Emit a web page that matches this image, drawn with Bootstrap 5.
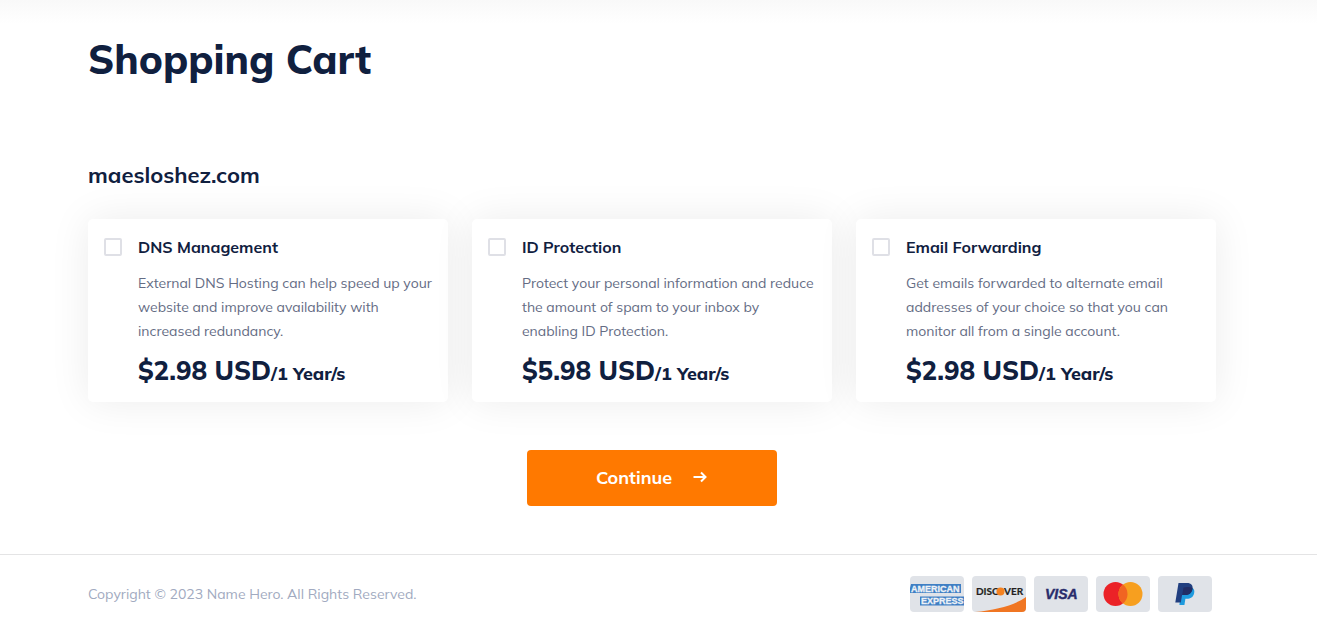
<!DOCTYPE html>
<html lang="en">
<head>
<meta charset="utf-8">
<meta name="viewport" content="width=device-width, initial-scale=1">
<title>Shopping Cart</title>
<link href="https://cdn.jsdelivr.net/npm/bootstrap@5.3.0/dist/css/bootstrap.min.css" rel="stylesheet">
<style>
  :root { --ink: #10203f; --body-ink: #646c84; --muted-ink: #a1aac0; --brand: #ff7900; }
  body { font-family: Mulish, Muli, "Open Sans", sans-serif; color: var(--ink); background: #fff; }
  .top-shade { height: 24px; background: linear-gradient(#f9f9f9, #fff); }
  .page-shell { padding-right: 13px; }
  .cart-container { max-width: 1152px; }
  .cart-title { font-size: 40px; line-height: 48px; font-weight: 800; padding-top: 11px; margin-bottom: 76px; }
  .domain-name { font-size: 22px; line-height: 32px; font-weight: 700; margin-bottom: 28px; }
  .addon-card { border: 0; border-radius: 5px; padding: 16px; box-shadow: 0 0 40px rgba(0, 0, 0, .08); }
  .addon-card .form-check-input { width: 18px; height: 18px; margin: 3px 0 0; border: 2px solid #dfe0e6; border-radius: 2px; }
  .addon-name { font-size: 16px; line-height: 24px; font-weight: 700; }
  .addon-text { font-size: 14px; line-height: 24px; color: var(--body-ink); margin: 12px 0; }
  .addon-price { font-size: 26px; line-height: 31px; font-weight: 800; }
  .addon-term { font-size: 18px; line-height: 1; }
  .btn-continue { --bs-btn-color: #fff; --bs-btn-bg: var(--brand); --bs-btn-hover-color: #fff; --bs-btn-hover-bg: #e66d00; --bs-btn-active-color: #fff; --bs-btn-active-bg: #d96700;
    width: 250px; height: 56px; border: 0; border-radius: 4px; padding: 5px 12px 7px; font-size: 18px; font-weight: 700; gap: 20px; }
  .cart-footer { border-top: 1px solid #e4e4e5; font-size: 14px; line-height: 24px; color: var(--muted-ink); padding: 21px 0 8px; }
  .pay-list svg { display: block; }
</style>
</head>
<body>
<div class="top-shade"></div>
<main class="page-shell">
  <form class="container cart-container">
    <h1 class="cart-title">Shopping Cart</h1>
    <h2 class="domain-name">maesloshez.com</h2>
    <div class="row g-4">
      <div class="col-12 col-md-4">
        <div class="card addon-card h-100 d-flex flex-row gap-3">
          <input class="form-check-input flex-shrink-0" type="checkbox" id="addon-dns">
          <div>
            <label class="addon-name d-block" for="addon-dns">DNS Management</label>
            <p class="addon-text">External DNS Hosting can help speed up your website and improve availability with increased redundancy.</p>
            <div class="addon-price">$2.98 USD<span class="addon-term">/1 Year/s</span></div>
          </div>
        </div>
      </div>
      <div class="col-12 col-md-4">
        <div class="card addon-card h-100 d-flex flex-row gap-3">
          <input class="form-check-input flex-shrink-0" type="checkbox" id="addon-id">
          <div>
            <label class="addon-name d-block" for="addon-id">ID Protection</label>
            <p class="addon-text">Protect your personal information and reduce the amount of spam to your inbox by enabling ID Protection.</p>
            <div class="addon-price">$5.98 USD<span class="addon-term">/1 Year/s</span></div>
          </div>
        </div>
      </div>
      <div class="col-12 col-md-4">
        <div class="card addon-card h-100 d-flex flex-row gap-3">
          <input class="form-check-input flex-shrink-0" type="checkbox" id="addon-email">
          <div>
            <label class="addon-name d-block" for="addon-email">Email Forwarding</label>
            <p class="addon-text">Get emails forwarded to alternate email addresses of your choice so that you can monitor all from a single account.</p>
            <div class="addon-price">$2.98 USD<span class="addon-term">/1 Year/s</span></div>
          </div>
        </div>
      </div>
    </div>
    <div class="d-flex justify-content-center my-5">
      <button type="submit" class="btn btn-continue d-inline-flex align-items-center justify-content-center">
        Continue
        <svg width="16" height="16" viewBox="0 0 16 16" fill="none" stroke="#fff" stroke-width="2" aria-hidden="true"><path d="M1.500 8H13.500M9 3.500L13.500 8L9 12.500"/></svg>
      </button>
    </div>
  </form>
</main>
<footer class="cart-footer">
  <div class="page-shell">
    <div class="container cart-container d-flex flex-wrap align-items-center justify-content-between gap-3">
      <span>Copyright © 2023 Name Hero. All Rights Reserved.</span>
      <div class="pay-list d-flex gap-2 me-1">
        <svg width="54" height="36" viewBox="0 0 54 36" role="img" aria-label="American Express">
          <rect width="54" height="36" rx="4" fill="#e0e3e8"/>
          <path d="M1 8h50v9H0V12ZM10 20.500h44v9H10Z" fill="#3f7fc4"/>
          <g font-family="Liberation Sans, sans-serif" font-weight="700" font-size="9" fill="#eef2f7" stroke="#eef2f7" stroke-width=".3">
            <text x="1" y="16">AMERICAN</text>
            <text x="11" y="28">EXPRESS</text>
          </g>
        </svg>
        <svg width="54" height="36" viewBox="0 0 54 36" role="img" aria-label="Discover">
          <rect width="54" height="36" rx="4" fill="#e0e3e8"/>
          <path d="M54 21V32a4 4 0 0 1-4 4H3C24 34 43 29 54 21Z" fill="#f07623"/>
          <g font-family="Lato, sans-serif" font-weight="700" font-size="10" fill="#231f20" stroke="#231f20" stroke-width=".2">
            <text x="4" y="19">DISC</text>
            <text x="32" y="19">VER</text>
          </g>
          <circle cx="28.500" cy="15.500" r="4" fill="#f58220"/>
        </svg>
        <svg width="54" height="36" viewBox="0 0 54 36" role="img" aria-label="Visa">
          <rect width="54" height="36" rx="4" fill="#e0e3e8"/>
          <text x="11" y="23" font-family="Liberation Sans, sans-serif" font-style="italic" font-weight="700" font-size="14" fill="#292c6b" stroke="#292c6b" stroke-width=".4">VISA</text>
        </svg>
        <svg width="54" height="36" viewBox="0 0 54 36" role="img" aria-label="Mastercard">
          <rect width="54" height="36" rx="4" fill="#e0e3e8"/>
          <circle cx="19.500" cy="18" r="12" fill="#eb2227"/>
          <circle cx="34.500" cy="18" r="12" fill="#f79f1f"/>
          <path d="M27 8.600a12 12 0 0 1 0 18.800a12 12 0 0 1 0-18.800Z" fill="#f16422"/>
        </svg>
        <svg width="54" height="36" viewBox="0 0 54 36" role="img" aria-label="PayPal">
          <rect width="54" height="36" rx="4" fill="#e0e3e8"/>
          <path d="M23.500 11h9c3.500 1.200 4.500 3.500 3.500 6.700c-1 3.600-3.500 5-7 5h-1.600l-1 6.300h-5Z" fill="#1f9bde"/>
          <path d="M20.500 7h8.500c4.300 0 6.200 2.300 5.400 6.200c-.8 4-3.400 5.800-7.600 5.800h-2.700l-1.300 7.500h-5.500Z" fill="#213f80"/>
          <path d="M25.500 11.500c3-.7 6.500-.7 8.900.3q.1.700 0 1.400c-.8 4-3.400 5.800-7.600 5.800h-2.600Z" fill="#222d65"/>
        </svg>
      </div>
    </div>
  </div>
</footer>
<script src="https://cdn.jsdelivr.net/npm/bootstrap@5.3.0/dist/js/bootstrap.bundle.min.js"></script>
</body>
</html>
